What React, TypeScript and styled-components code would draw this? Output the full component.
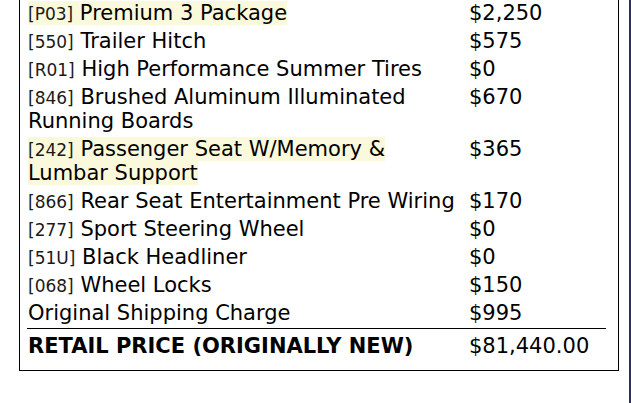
import React from 'react';
import styled, { createGlobalStyle } from 'styled-components';

const GlobalStyle = createGlobalStyle`
  html, body {
    margin: 0;
    padding: 0;
    background: #ffffff;
    overflow: hidden;
  }
  body {
    font-family: "DejaVu Sans", "Liberation Sans", sans-serif;
    color: #000;
  }
`

const Page = styled.div`
  display: flex;
  align-items: flex-start;
  width: 631px;
  height: 403px;
  overflow: hidden;
`

const Content = styled.div`
  flex: 1;
  display: flow-root;
`

const EdgeRule = styled.div`
  flex: 0 0 2px;
  align-self: stretch;
  background: #2f2b6c;
`

const Sticker = styled.div`
  margin: -13px 0 0 19px;
  width: 580px;
  padding: 10px 11px 6px 7px;
  border: 1px solid #000;
`

const PriceTable = styled.table`
  width: 579px;
  border-collapse: separate;
  border-spacing: 0 2px;
  font-size: 21px;
  line-height: 24px;
  table-layout: fixed;
`

const Cell = styled.td<{ $total?: boolean }>`
  padding: ${p => (p.$total ? '5px 1px 4px' : '1px')};
  vertical-align: top;
  border-top: ${p => (p.$total ? '1px solid #000' : 'none')};
`

const Label = styled.span<{ $hl?: boolean }>`
  background: ${p => (p.$hl ? '#fbf9dc' : 'transparent')};
`

const Code = styled.span`
  font-size: 17px;
  line-height: 0;
  color: #1a1a1a;
`

const TotalLabel = styled.span`
  font-weight: bold;
`

type Option = { code?: string; name: string; price: string; hl?: boolean };

const options: Option[] = [
  { code: 'P03', name: 'Premium 3 Package', price: '$2,250', hl: true },
  { code: '550', name: 'Trailer Hitch', price: '$575' },
  { code: 'R01', name: 'High Performance Summer Tires', price: '$0' },
  { code: '846', name: 'Brushed Aluminum Illuminated Running Boards', price: '$670' },
  { code: '242', name: 'Passenger Seat W/Memory & Lumbar Support', price: '$365', hl: true },
  { code: '866', name: 'Rear Seat Entertainment Pre Wiring', price: '$170' },
  { code: '277', name: 'Sport Steering Wheel', price: '$0' },
  { code: '51U', name: 'Black Headliner', price: '$0' },
  { code: '068', name: 'Wheel Locks', price: '$150' },
  { name: 'Original Shipping Charge', price: '$995' },
];

export default function App() {
  return (
    <Page>
      <GlobalStyle />
      <Content>
        <Sticker>
          <PriceTable>
            <colgroup>
              <col style={{ width: 441 }} />
              <col />
            </colgroup>
            <tbody>
              {options.map(o => (
                <tr key={o.name}>
                  <Cell>
                    <Label $hl={o.hl}>
                      {o.code && <Code>[{o.code}]</Code>}
                      {o.code ? ' ' : ''}
                      {o.name}
                    </Label>
                  </Cell>
                  <Cell>{o.price}</Cell>
                </tr>
              ))}
              <tr>
                <Cell $total>
                  <TotalLabel>RETAIL PRICE (ORIGINALLY NEW)</TotalLabel>
                </Cell>
                <Cell $total>$81,440.00</Cell>
              </tr>
            </tbody>
          </PriceTable>
        </Sticker>
      </Content>
      <EdgeRule />
    </Page>
  );
}
